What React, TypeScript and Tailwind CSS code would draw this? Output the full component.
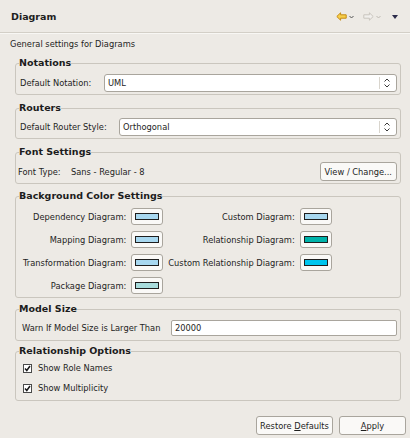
import React from "react";

const font = { fontFamily: '"DejaVu Sans", Verdana, sans-serif' };

function Group({ title, children, className = "" }: { title: string; children: React.ReactNode; className?: string }) {
  return (
    <fieldset className={`ml-[15px] mr-[9px] border border-[#cac6be] rounded-[3px] pl-[4px] pr-[3px] ${className}`}>
      <legend className="-ml-[1px] text-[9.5px] font-bold leading-[12px] text-[#1c1c1c]">{title}</legend>
      {children}
    </fieldset>
  );
}

function UpDown() {
  return (
    <svg width="6" height="10" viewBox="0 0 6 10" className="block">
      <path d="M0.5 3.5 L3 1 L5.5 3.5" fill="none" stroke="#3a3a3a" strokeWidth="1" />
      <path d="M0.5 6.5 L3 9 L5.5 6.5" fill="none" stroke="#3a3a3a" strokeWidth="1" />
    </svg>
  );
}

function Combo({ value }: { value: string }) {
  return (
    <div className="flex-1 h-[18px] bg-white border border-[#a9a59d] rounded-[3px] flex items-center pl-[3px] pr-[6px]">
      <span className="flex-1">{value}</span>
      <div className="w-px h-[12px] bg-[#d9d5cd] mr-[4px]" />
      <UpDown />
    </div>
  );
}

function ColorBtn({ color }: { color: string }) {
  return (
    <div className="w-[32px] h-[17px] border border-[#a9a59d] rounded-[3px] bg-[#faf9f7] flex items-center justify-center">
      <div className={`w-[24px] h-[7px] border border-[#1e1e1e] ${color}`} />
    </div>
  );
}

function Check({ label }: { label: string }) {
  return (
    <div className="flex items-center h-[20px]">
      <div className="w-[9px] h-[9px] border border-[#4a4a4a] bg-white flex items-center justify-center ml-[3px]">
        <svg width="7" height="7" viewBox="0 0 7 7" className="block">
          <path d="M1 3.5 L2.8 5.5 L6 1" fill="none" stroke="#1a1a1a" strokeWidth="1.5" />
        </svg>
      </div>
      <span className="ml-[6px]">{label}</span>
    </div>
  );
}

export default function App() {
  return (
    <div style={font} className="w-[410px] h-[438px] bg-[#edeae5] text-[8.3px] leading-[12px] text-[#1e1e1e] overflow-hidden flex flex-col">
      {/* header */}
      <div className="h-[33px] flex items-center pl-[11px] pr-[12px] border-b border-[#d3cfc7]">
        <span className="text-[9.5px] font-bold flex-1 mt-[1px]">Diagram</span>
        <div className="flex items-center">
          <svg width="11" height="9" viewBox="0 0 11 9" className="block">
            <path d="M0.8 4.5 L4.6 0.8 L4.6 2.8 L10.2 2.8 L10.2 6.2 L4.6 6.2 L4.6 8.2 Z" fill="#f7cf4a" stroke="#c48a16" strokeWidth="1" strokeLinejoin="round" />
          </svg>
          <svg width="5" height="4" viewBox="0 0 5 4" className="block ml-[2px] mt-[1px]">
            <path d="M0.5 1 L2.5 3 L4.5 1" fill="none" stroke="#555" strokeWidth="1" />
          </svg>
          <svg width="11" height="9" viewBox="0 0 11 9" className="block ml-[9px]">
            <path d="M10.2 4.5 L6.4 0.8 L6.4 2.8 L0.8 2.8 L0.8 6.2 L6.4 6.2 L6.4 8.2 Z" fill="#f1efec" stroke="#c9c5be" strokeWidth="1" strokeLinejoin="round" />
          </svg>
          <svg width="5" height="4" viewBox="0 0 5 4" className="block ml-[2px] mt-[1px]">
            <path d="M0.5 1 L2.5 3 L4.5 1" fill="none" stroke="#bdb9b2" strokeWidth="1" />
          </svg>
          <svg width="6" height="4" viewBox="0 0 6 4" className="block ml-[11px] mt-[2px]">
            <path d="M0 0 L6 0 L3 4 Z" fill="#2c2c4a" />
          </svg>
        </div>
      </div>
      <div className="h-px bg-[#f8f7f4]" />

      <div className="pl-[10px] mt-[4px]">General settings for Diagrams</div>

      <Group title="Notations" className="mt-[7px] pt-[5px] pb-[2px]">
        <div className="flex items-center">
          <span className="w-[84px] shrink-0">Default Notation:</span>
          <Combo value="UML" />
        </div>
      </Group>

      <Group title="Routers" className="mt-[7px] pt-[4px] pb-[2px]">
        <div className="flex items-center">
          <span className="w-[99px] shrink-0">Default Router Style:</span>
          <Combo value="Orthogonal" />
        </div>
      </Group>

      <Group title="Font Settings" className="mt-[7px] pt-[4px] pb-[2px]">
        <div className="flex items-center">
          <span className="-ml-[2px] w-[53px]">Font Type:</span>
          <span className="flex-1">Sans - Regular - 8</span>
          <div className="h-[19px] px-[4px] border border-[#a9a59d] rounded-[3px] bg-[#faf9f7] flex items-center">View / Change...</div>
        </div>
      </Group>

      <Group title="Background Color Settings" className="mt-[6px] pt-[6px] pb-[3px]">
        <div className="ml-[3px] grid grid-cols-[auto_auto_auto_auto] justify-start items-center gap-x-[5px] gap-y-[6px] justify-items-end">
          <span>Dependency Diagram:</span>
          <ColorBtn color="bg-[#a8d8f0]" />
          <span>Custom Diagram:</span>
          <ColorBtn color="bg-[#a8d8f0]" />
          <span>Mapping Diagram:</span>
          <ColorBtn color="bg-[#a8d8f0]" />
          <span>Relationship Diagram:</span>
          <ColorBtn color="bg-[#00b3aa]" />
          <span>Transformation Diagram:</span>
          <ColorBtn color="bg-[#a8d8f0]" />
          <span>Custom Relationship Diagram:</span>
          <ColorBtn color="bg-[#00c5ee]" />
          <span>Package Diagram:</span>
          <ColorBtn color="bg-[#a8dcdc]" />
        </div>
      </Group>

      <Group title="Model Size" className="mt-[5px] pt-[5px] pb-[4px]">
        <div className="flex items-center">
          <span className="ml-[2px] w-[149px] shrink-0">Warn If Model Size is Larger Than</span>
          <div className="flex-1 h-[16px] bg-white border border-[#a9a59d] rounded-[2px] flex items-center pl-[3px]">20000</div>
        </div>
      </Group>

      <Group title="Relationship Options" className="mt-[4px] pt-[1px] pb-[2px]">
        <Check label="Show Role Names" />
        <Check label="Show Multiplicity" />
      </Group>

      <div className="flex justify-end gap-[6px] pr-[4px] mt-[15px]">
        <div className="w-[77px] h-[19px] border border-[#a9a59d] rounded-[3px] bg-[#faf9f7] flex items-center justify-center">
          <span>Restore <span className="underline">D</span>efaults</span>
        </div>
        <div className="w-[67px] h-[19px] border border-[#a9a59d] rounded-[3px] bg-[#faf9f7] flex items-center justify-center">
          <span><span className="underline">A</span>pply</span>
        </div>
      </div>
    </div>
  );
}
